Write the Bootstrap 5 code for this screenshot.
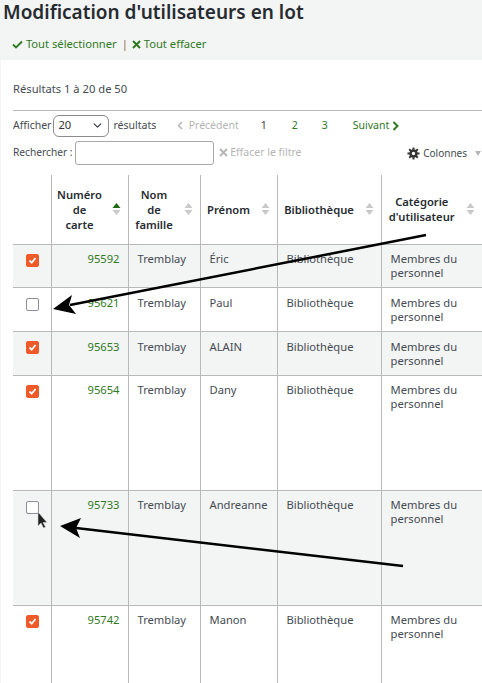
<!DOCTYPE html>
<html lang="fr">
<head>
<meta charset="utf-8">
<title>Modification d'utilisateurs en lot</title>
<link href="https://cdn.jsdelivr.net/npm/bootstrap@5.3.0/dist/css/bootstrap.min.css" rel="stylesheet">
<style>
html,body{height:683px;overflow:hidden}
body{background:#f3f4f4;font-family:"Noto Sans","Open Sans",sans-serif;font-size:11.2px;color:#444b52;position:relative;width:482px}
a{color:#2f7a1e;text-decoration:none}
.ttl{font-size:19px;font-weight:600;color:#262b30;margin:0;padding:0 0 0 3px;height:24px;line-height:24px;white-space:nowrap}
.selbar{height:36px;padding:2px 0 0 12px;color:#2f7a1e;line-height:17px;font-size:11.2px}
.sep{color:#8a6a4a;margin:0 4px 0 5px}
.panel{background:#fff;margin-left:1px;height:623px;padding:0 0 0 12px;overflow:hidden}
.info{height:51px;padding-top:21px;line-height:16px;border-bottom:1px solid #b9b9b9;font-size:11.2px}
.ctl1{height:25px;margin-top:2px;white-space:nowrap;font-size:10.5px}
.ctl2{height:24px;margin-top:3px;white-space:nowrap;font-size:10.5px}
.lbl{font-size:10.2px}
.sel{width:56px;height:22px;font-size:11.2px;padding:0 0 0 4px;background-position:right 6px center;background-size:9px;border-color:#8c8c8c;color:#333;margin:0 4px 0 2px}
.srch{width:139px;height:24px;border-radius:3px;border-color:#a8a8a8;margin:0 5px 0 2px;padding:0}
.num{color:#444;display:inline-block}
.off{color:#b5b5b5}
.cols{font-size:10px}
.gprev{margin-left:21px}.g1{margin-left:22px}.g2{margin-left:25px}.g3{margin-left:24px}.gnext{margin-left:25px}
.gtxt{margin-left:3px}
.tbl{table-layout:fixed;width:469px;margin:10px 0 0;border-collapse:collapse;font-size:11.2px;color:#444b52}
.tbl th,.tbl td{border:1px solid #b9b9b9;padding:7px 8px 0 9px;line-height:14px;vertical-align:top}
.tbl .r1 td{padding-top:8px}
.tbl th{height:69px;font-weight:600;color:#262b30;text-align:center;vertical-align:middle;padding:0 24px 0 4px;position:relative;border-top:0;background:#fff;line-height:15px}
.tbl tr>*:first-child{border-left:0}
.tbl tr>*:last-child{border-right:0}
.sh td{background:#f3f4f4}
.r0{height:43px}.r1{height:44px}.r2{height:115px}
.tbl td.cardno{text-align:right;color:#2f7a1e}
.sorter{position:absolute;right:7px;top:50%;margin-top:-7px;width:9px;height:14px}
.cb{display:block;width:13px;height:13px;border-radius:2px;border:1px solid #8e8e9a;background:#fff;margin:1px 0 0 5px}
.cb.on{background:#f05a28;border-color:#f05a28;margin-top:0}
.cb svg{display:block}
.ovl{position:absolute;left:0;top:0;pointer-events:none}
.ic{vertical-align:-1px}
.tbl td.c0,.tbl .r1 td.c0{padding:9px 0 0 8px}
</style>
</head>
<body>
<h1 class="ttl">Modification d'utilisateurs en lot</h1>
<div class="selbar d-flex align-items-center">
  <a href="#"><svg class="ic" width="11" height="9" viewBox="0 0 11 9"><path d="M1 4.500 4 7.500 10 1.500" fill="none" stroke="#2f7a1e" stroke-width="1.800"/></svg> Tout sélectionner</a>
  <span class="sep">|</span>
  <a href="#"><svg class="ic" width="9" height="9" viewBox="0 0 9 9"><path d="M1 1 8 8M8 1 1 8" fill="none" stroke="#2f7a1e" stroke-width="2"/></svg> Tout effacer</a>
</div>
<div class="panel">
  <div class="info">Résultats 1 à 20 de 50</div>
  <div class="ctl1 d-flex align-items-center">
    <span>Afficher</span>
    <select class="form-select sel"><option>20</option></select>
    <span>résultats</span>
    <span class="off gprev"><svg width="6" height="9" viewBox="0 0 6 9"><path d="M5 1 1.500 4.500 5 8" fill="none" stroke="#b5b5b5" stroke-width="1.500"/></svg>&nbsp; Précédent</span>
    <span class="num g1">1</span>
    <a class="g2" href="#">2</a>
    <a class="g3" href="#">3</a>
    <a class="gnext" href="#">Suivant <svg width="7" height="10" viewBox="0 0 7 10"><path d="M1.500 1 5.500 5 1.500 9" fill="none" stroke="#2f7a1e" stroke-width="2"/></svg></a>
  </div>
  <div class="ctl2 d-flex align-items-center">
    <span class="lbl">Rechercher :</span>
    <input class="form-control srch" type="text" aria-label="Rechercher">
    <span class="off"><svg class="ic" width="9" height="9" viewBox="0 0 9 9"><path d="M1 1 8 8M8 1 1 8" fill="none" stroke="#b5b5b5" stroke-width="1.800"/></svg> Effacer le filtre</span>
    <span class="ms-auto d-flex align-items-center cols">
      <svg width="13" height="13" viewBox="0 0 14 14"><circle cx="7" cy="7" r="3.200" fill="none" stroke="#333" stroke-width="2.800"/><path d="M7 .5V3M7 11v2.500M.5 7H3M11 7h2.500M2.400 2.400 4.200 4.200M9.800 9.800l1.800 1.800M11.600 2.400 9.800 4.200M4.200 9.800l-1.800 1.800" stroke="#333" stroke-width="2.200"/></svg>
      <span class="gtxt text-nowrap">Colonnes</span>
      <svg class="ms-2" width="6" height="5" viewBox="0 0 6 5" style="margin-right:1px"><path d="M0 0H6L3 5Z" fill="#b5b5b5"/></svg>
    </span>
  </div>
  <table class="tbl">
    <colgroup><col style="width:38px"><col style="width:77px"><col style="width:72px"><col style="width:77px"><col style="width:104px"><col></colgroup>
    <thead><tr>
      <th></th>
      <th>Numéro<br>de<br>carte<svg class="sorter" viewBox="0 0 9 14"><path d="M4.500 1 8.500 6H.5Z" fill="#1d6b12"/><path d="M.5 8H8.500L4.500 13Z" fill="#c9c9c9"/></svg></th>
      <th>Nom<br>de<br>famille<svg class="sorter" viewBox="0 0 9 14"><path d="M4.500 1 8.500 6H.5Z" fill="#c9c9c9"/><path d="M.5 8H8.500L4.500 13Z" fill="#c9c9c9"/></svg></th>
      <th>Prénom<svg class="sorter" viewBox="0 0 9 14"><path d="M4.500 1 8.500 6H.5Z" fill="#c9c9c9"/><path d="M.5 8H8.500L4.500 13Z" fill="#c9c9c9"/></svg></th>
      <th>Bibliothèque<svg class="sorter" viewBox="0 0 9 14"><path d="M4.500 1 8.500 6H.5Z" fill="#c9c9c9"/><path d="M.5 8H8.500L4.500 13Z" fill="#c9c9c9"/></svg></th>
      <th>Catégorie<br>d'utilisateur<svg class="sorter" viewBox="0 0 9 14"><path d="M4.500 1 8.500 6H.5Z" fill="#c9c9c9"/><path d="M.5 8H8.500L4.500 13Z" fill="#c9c9c9"/></svg></th>
    </tr></thead>
    <tbody>
      <tr class="r0 sh"><td class="c0"><span class="cb on"><svg width="11" height="11" viewBox="0 0 11 11"><path d="M2.500 5.500 4.700 7.700 8.500 3" fill="none" stroke="#fff" stroke-width="1.800"/></svg></span></td><td class="cardno">95592</td><td>Tremblay</td><td>Éric</td><td>Bibliothèque</td><td>Membres du personnel</td></tr>
      <tr class="r1"><td class="c0"><span class="cb"></span></td><td class="cardno">95621</td><td>Tremblay</td><td>Paul</td><td>Bibliothèque</td><td>Membres du personnel</td></tr>
      <tr class="r1 sh"><td class="c0"><span class="cb on"><svg width="11" height="11" viewBox="0 0 11 11"><path d="M2.500 5.500 4.700 7.700 8.500 3" fill="none" stroke="#fff" stroke-width="1.800"/></svg></span></td><td class="cardno">95653</td><td>Tremblay</td><td>ALAIN</td><td>Bibliothèque</td><td>Membres du personnel</td></tr>
      <tr class="r2"><td class="c0"><span class="cb on"><svg width="11" height="11" viewBox="0 0 11 11"><path d="M2.500 5.500 4.700 7.700 8.500 3" fill="none" stroke="#fff" stroke-width="1.800"/></svg></span></td><td class="cardno">95654</td><td>Tremblay</td><td>Dany</td><td>Bibliothèque</td><td>Membres du personnel</td></tr>
      <tr class="r2 sh"><td class="c0"><span class="cb"></span></td><td class="cardno">95733</td><td>Tremblay</td><td>Andreanne</td><td>Bibliothèque</td><td>Membres du personnel</td></tr>
      <tr class="r2"><td class="c0"><span class="cb on"><svg width="11" height="11" viewBox="0 0 11 11"><path d="M2.500 5.500 4.700 7.700 8.500 3" fill="none" stroke="#fff" stroke-width="1.800"/></svg></span></td><td class="cardno">95742</td><td>Tremblay</td><td>Manon</td><td>Bibliothèque</td><td>Membres du personnel</td></tr>
    </tbody>
  </table>
</div>
<svg class="ovl" width="482" height="683" viewBox="0 0 482 683">
  <path d="M426 235 70 305" stroke="#000" stroke-width="2.500" fill="none"/>
  <path d="M53 309 72 295 69 305 76 314Z" fill="#000"/>
  <path d="M403 566 76 528" stroke="#000" stroke-width="2.500" fill="none"/>
  <path d="M60 526 81 518 76 528 80 538Z" fill="#000"/>
  <path d="M38 512V526L41 523 43.500 528 45.500 527 43 522.500H47Z" fill="#222" stroke="#ccc" stroke-width=".6"/>
</svg>
</body>
</html>
